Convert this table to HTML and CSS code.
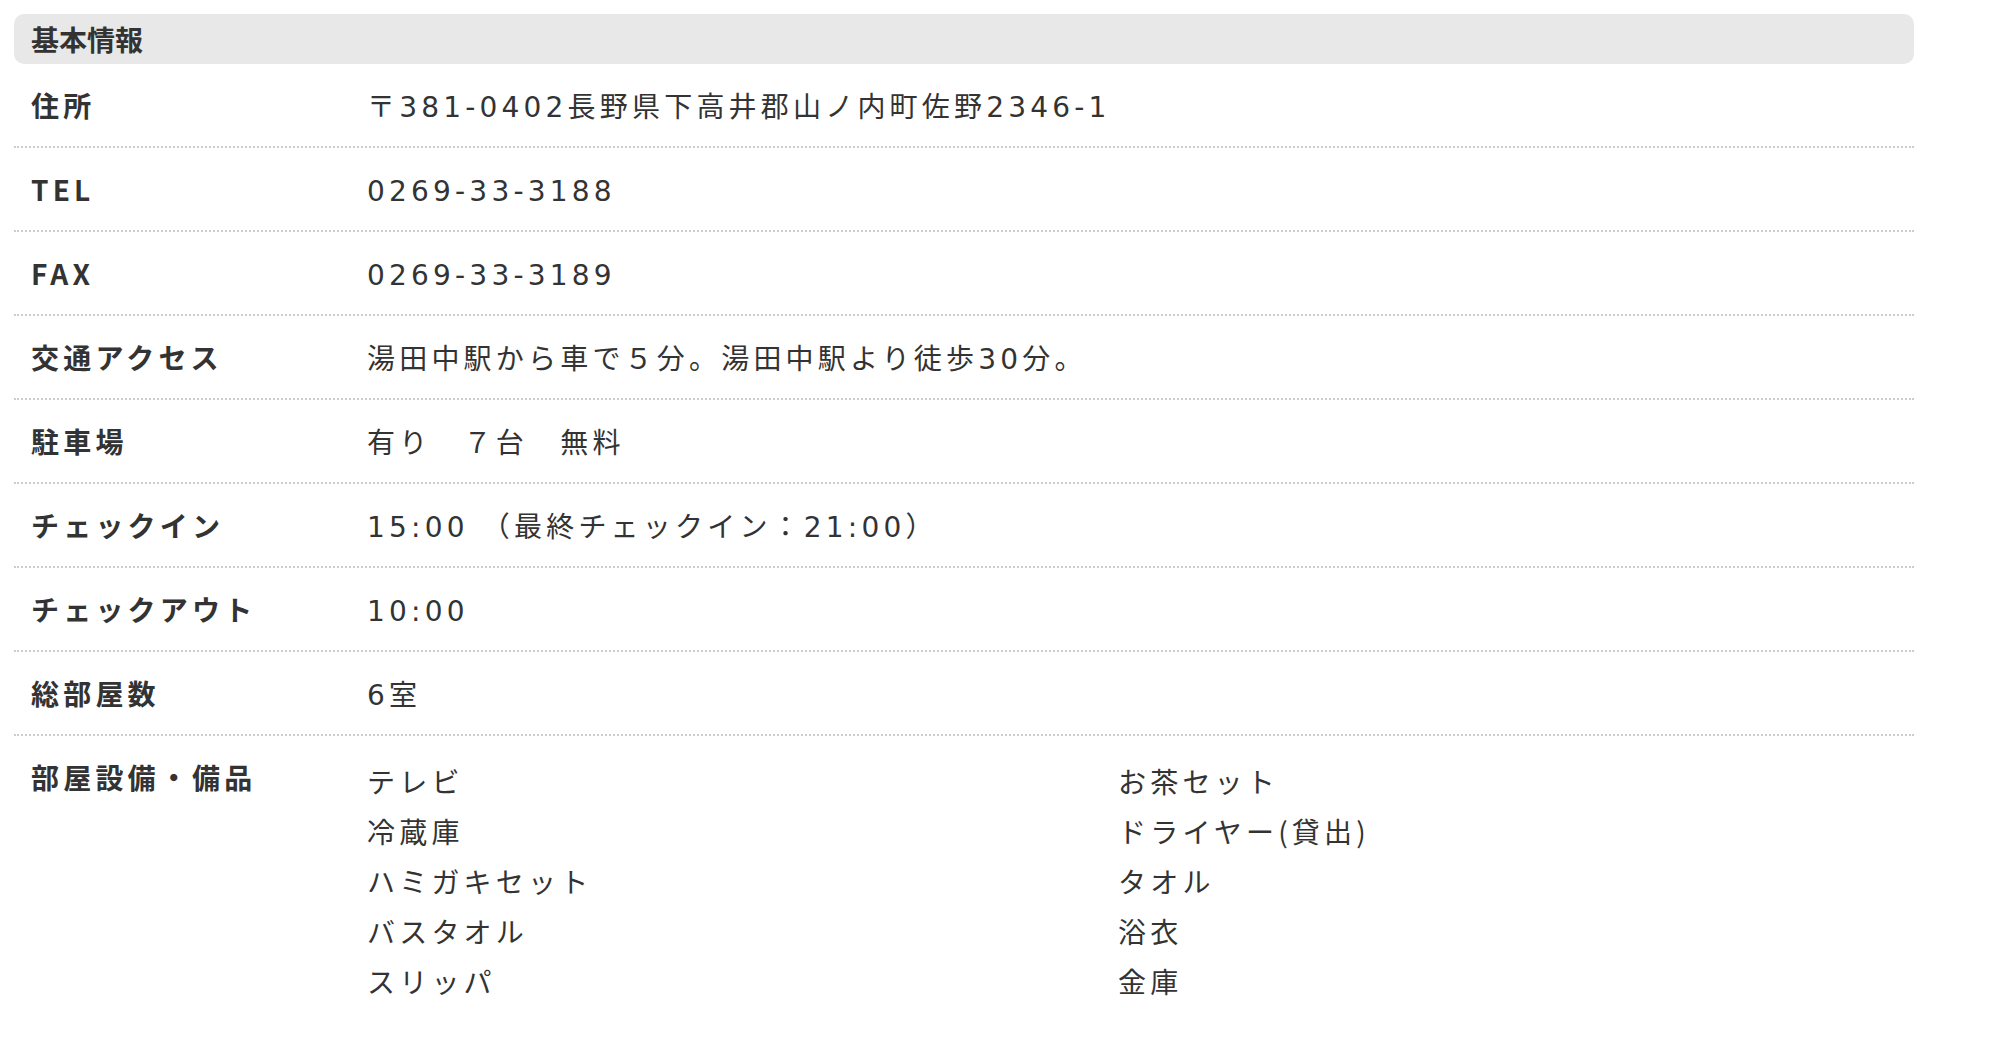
FILE: index.html
```html
<!DOCTYPE html>
<html lang="ja">
<head>
<meta charset="utf-8">
<title>基本情報</title>
<link rel="stylesheet" href="styles.css">
</head>
<body>
<section class="info">
  <h2 class="info-title">基本情報</h2>
  <dl class="info-list">
    <div class="info-row"><dt>住所</dt><dd><span class="val">〒381-0402長野県下高井郡山ノ内町佐野2346-1</span></dd></div>
    <div class="info-row"><dt>TEL</dt><dd><span class="val">0269-33-3188</span></dd></div>
    <div class="info-row"><dt>FAX</dt><dd><span class="val">0269-33-3189</span></dd></div>
    <div class="info-row"><dt>交通アクセス</dt><dd><span class="val">湯田中駅から車で５分。湯田中駅より徒歩30分。</span></dd></div>
    <div class="info-row"><dt>駐車場</dt><dd><span class="val">有り　７台　無料</span></dd></div>
    <div class="info-row"><dt>チェックイン</dt><dd><span class="val">15:00 （最終チェックイン：21:00）</span></dd></div>
    <div class="info-row"><dt>チェックアウト</dt><dd><span class="val">10:00</span></dd></div>
    <div class="info-row"><dt>総部屋数</dt><dd><span class="val">6室</span></dd></div>
    <div class="info-row info-row--last"><dt>部屋設備・備品</dt><dd>
      <ul class="amenities">
        <li>テレビ</li><li>お茶セット</li>
        <li>冷蔵庫</li><li>ドライヤー(貸出)</li>
        <li>ハミガキセット</li><li>タオル</li>
        <li>バスタオル</li><li>浴衣</li>
        <li>スリッパ</li><li>金庫</li>
      </ul>
    </dd></div>
  </dl>
</section>
</body>
</html>
```
FILE: styles.css
```css
html, body {
  margin: 0;
  padding: 0;
  background: #ffffff;
}

body {
  font-family: "Noto Sans CJK JP", "Noto Sans", sans-serif;
  color: #333333;
}

.info {
  width: 1900px;
  margin: 14px 0 0 14px;
}

.info-title {
  margin: 0;
  height: 50px;
  padding: 0 17px;
  background: #e8e8e8;
  border-radius: 10px;
  font-size: 28px;
  font-weight: 700;
  line-height: 50px;
}

.info-list {
  margin: 0;
  padding: 0;
}

.info-row {
  display: flex;
  align-items: flex-start;
  padding: 20px 0;
  border-bottom: 2px dotted #cccccc;
  font-size: 28px;
  line-height: 42px;
  letter-spacing: 0.15em;
}

.info-row--last {
  border-bottom: none;
}

.info-row dt {
  flex: 0 0 336px;
  padding-left: 17px;
  font-weight: 700;
}

.info-row dd {
  margin: 0;
  flex: 1 1 auto;
}

.val {
  font-family: "DejaVu Sans", "Noto Sans CJK JP", sans-serif;
  line-height: 1;
}

.amenities {
  list-style: none;
  margin: 0;
  padding: 0;
  display: grid;
  grid-template-columns: 751px 751px;
  line-height: 50px;
}
```
